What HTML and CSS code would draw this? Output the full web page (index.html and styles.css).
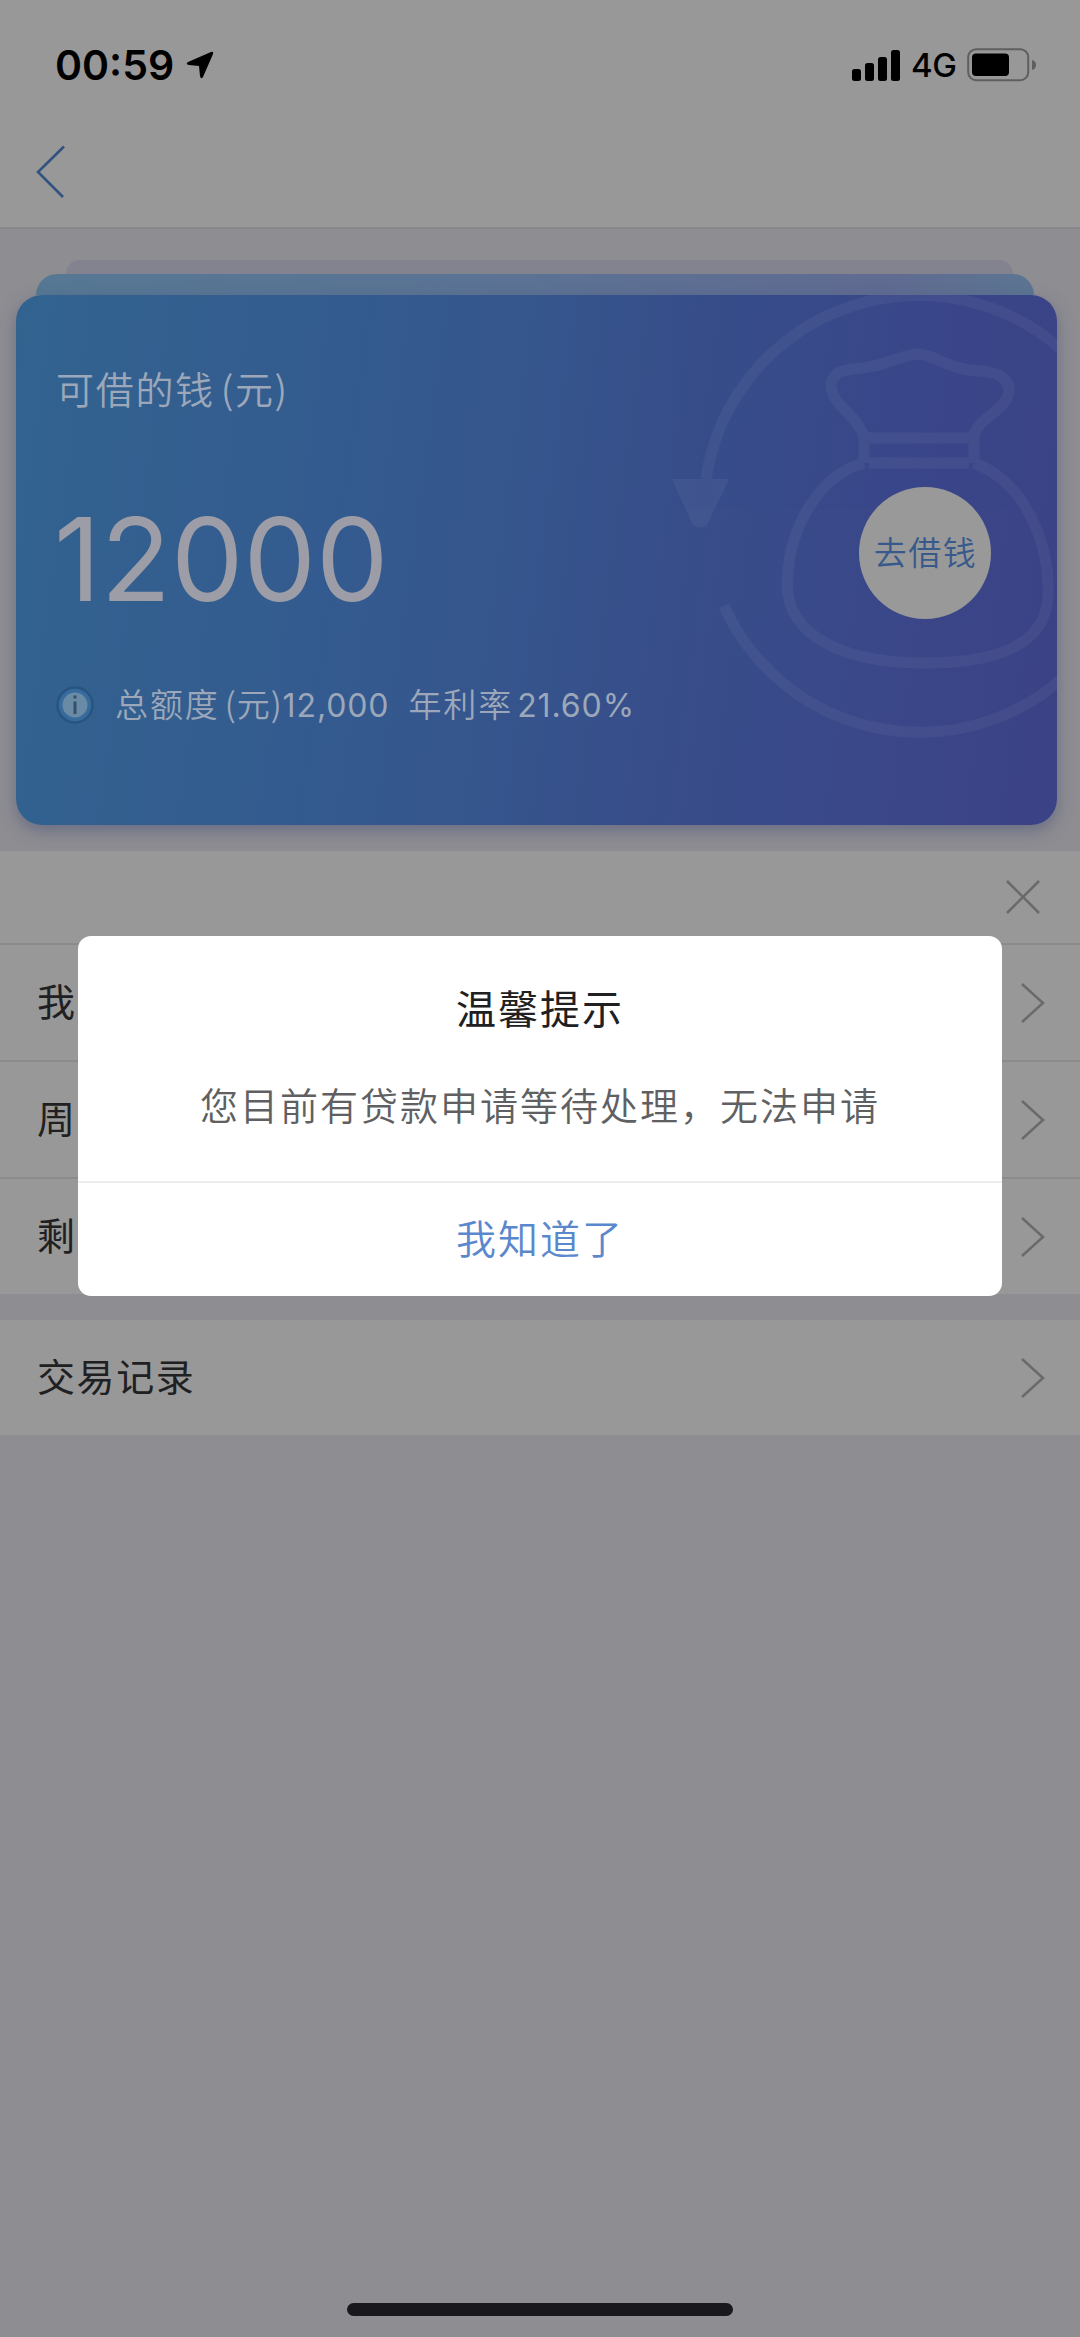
FILE: index.html
```html
<!DOCTYPE html>
<html lang="zh-CN">
<head>
<meta charset="utf-8">
<title>借钱</title>
<link rel="stylesheet" href="styles.css">
</head>
<body>
<div class="screen">
  <header class="topbar">
    <div class="status">
      <span class="time">00:59</span>
      <svg class="locate" width="30" height="30" viewBox="0 0 30 30"><path d="M3 12 26 2Q29 1 28 4L18 27Q16 30 15 26L14 16 4 15Q0 14 3 12Z"/></svg>
      <div class="status-right">
        <svg width="49" height="31" viewBox="0 0 49 31"><rect y="19" width="9" height="12" rx="2.5"/><rect x="13" y="13" width="9" height="18" rx="2.5"/><rect x="26" y="7" width="9" height="24" rx="2.5"/><rect x="39" width="9" height="31" rx="2.5"/></svg>
        <span class="network">4G</span>
        <svg width="70" height="34" viewBox="0 0 70 34"><rect x="1.2" y="1.2" width="60" height="31" rx="8" fill="none" stroke="#5f5f5f" stroke-width="2"/><rect x="5" y="5.5" width="37" height="22.5" rx="4"/><path d="M65 12Q69 13 69 17T65 22Z" fill="#5f5f5f"/></svg>
      </div>
    </div>
    <nav class="nav"><svg width="32" height="56" viewBox="0 0 32 56"><path d="M29 2.500 3 28 28 53" fill="none" stroke="#32527f" stroke-width="2.600"/></svg></nav>
  </header>

  <main>
    <section class="hero">
      <div class="layer layer-back"></div>
      <div class="layer layer-mid"></div>
      <div class="card">
        <svg class="bag" width="1041" height="530" viewBox="0 0 1041 530">
          <g fill="none" stroke="#fff" stroke-width="11" opacity=".045">
            <path d="M690 184A215 215 0 0 1 1060 69M708 311A215 215 0 0 0 1060 370"/>
            <path d="M848 168V141Q843 128 824 110C808 91 814 76 837 74C865 73 881 61 901 59C922 60 930 75 966 76C990 78 998 91 990 105C981 119 965 123 958 139V168"/>
            <path d="M853 143H953M853 168H953"/>
            <path d="M848 168C804 180 773 230 771 289C772 343 830 367 904 368C980 369 1030 350 1032 301C1034 250 1010 187 958 168"/>
            <path d="M656 184H713L691 230Q684 235 677 230Z" fill="#fff" stroke="none"/>
          </g>
        </svg>
        <div class="info">
          <p class="label">可借的钱<span class="unit">(元)</span></p>
          <p class="amount">12000</p>
          <p class="detail">
            <svg width="38" height="38" viewBox="0 0 38 38"><circle cx="19" cy="19" r="17.500" fill="#386b9d" stroke="#28557f" stroke-width="2.500"/><circle cx="19" cy="19" r="12.500" fill="#698ba5"/><path d="M19 9.500v3M19 15.500v12.500" stroke="#365069" stroke-width="3"/></svg>
            <span class="limit">总额度<span class="paren">(元)</span><span class="num">12,000</span></span>
            <span class="rate">年利率<span class="num percent">21.60%</span></span>
          </p>
        </div>
        <button class="borrow">去借钱</button>
      </div>
    </section>

    <section class="list">
      <div class="row head"><svg class="close" width="34" height="34" viewBox="0 0 34 34"><path d="M1 1 33 33M33 1 1 33"/></svg></div>
      <div class="row"><span>我</span><svg class="chev" width="25" height="42" viewBox="0 0 25 42"><path d="M2 2 23 21 2 40"/></svg></div>
      <div class="row"><span>周</span><svg class="chev" width="25" height="42" viewBox="0 0 25 42"><path d="M2 2 23 21 2 40"/></svg></div>
      <div class="row"><span>剩</span><svg class="chev" width="25" height="42" viewBox="0 0 25 42"><path d="M2 2 23 21 2 40"/></svg></div>
    </section>
    <section class="list records">
      <div class="row"><span>交易记录</span><svg class="chev" width="25" height="42" viewBox="0 0 25 42"><path d="M2 2 23 21 2 40"/></svg></div>
    </section>
  </main>

  <div class="home"></div>

  <div class="overlay">
    <div class="dialog">
      <div class="dialog-body">
        <h2>温馨提示</h2>
        <p>您目前有贷款申请等待处理，无法申请</p>
      </div>
      <button class="confirm">我知道了</button>
    </div>
  </div>
</div>
</body>
</html>
```

FILE: styles.css
```css
* { box-sizing: border-box; margin: 0; padding: 0; }
body { background: #8e8d92; font-family: "Noto Sans CJK SC", sans-serif; color: #202022; }
button { border: 0; font-family: inherit; }
svg { display: block; flex: none; }

.screen { position: relative; width: 1080px; height: 2337px; display: flex; flex-direction: column; overflow: hidden; }

.topbar { height: 229px; background: #989898; border-bottom: 2px solid #88888a; }
.status { height: 130px; padding: 0 43px 0 55px; display: flex; align-items: center; color: #000; }
.time { font: 600 41px/50px Inter, sans-serif; width: 118px; letter-spacing: 0; white-space: nowrap; }
.locate { margin-left: 12px; }
.status-right { margin-left: auto; display: flex; align-items: center; }
.network { font: 500 33px/40px Inter, sans-serif; width: 46px; margin: 0 10px; letter-spacing: -0.5px; }
.nav { height: 84px; padding-left: 35px; display: flex; align-items: center; }

.hero { height: 622px; padding: 31px 23px 0 16px; }
.layer { border-radius: 34px 34px 0 0; }
.layer-back { height: 14px; margin: 0 44px 0 50px; background: #82838f; }
.layer-mid { height: 21px; margin: 0 23px 0 20px; background: linear-gradient(90deg, #567894, #5b7394 45%, #606b91 85%, #5c7592); }
.card { position: relative; height: 530px; padding: 0 66px 0 40px; border-radius: 26px; background: linear-gradient(98deg, #32638f, #34598f 38%, #374f8a 60%, #3a4789 82%, #3b4285); box-shadow: 0 6px 16px rgba(70, 80, 120, .5); display: flex; justify-content: space-between; }
.bag { position: absolute; left: 0; top: 0; border-radius: 26px; }
.info { padding-top: 65px; color: #9ca8ba; }
.label { font-size: 38px; line-height: 56px; letter-spacing: 1.7px; font-weight: 350; }
.unit { margin-left: 6px; letter-spacing: 1.5px; }
.amount { margin: 74px 0 0 -2px; font: 400 115px/140px Inter, sans-serif; letter-spacing: 0; color: #9c9da6; }
.detail { margin-top: 50px; height: 50px; display: flex; align-items: center; font-size: 33px; font-weight: 350; letter-spacing: 1.9px; white-space: nowrap; }
.limit { margin: -4px 0 0 21px; }
.paren { margin-left: 5px; letter-spacing: 1px; }
.num { font-family: Inter, sans-serif; font-size: 32px; font-weight: 400; letter-spacing: .9px; }
.rate { margin: -4px 0 0 19px; }
.percent { margin-left: 4px; }
.borrow { position: relative; flex: none; margin-top: 192px; width: 132px; height: 132px; padding-bottom: 4px; border-radius: 50%; background: #999; color: #38598c; font-size: 33px; font-weight: 350; letter-spacing: 1.5px; text-indent: 1px; white-space: nowrap; }

.list { background: #989898; }
.row { height: 117px; padding: 0 35px 0 37px; display: flex; align-items: center; justify-content: space-between; font-size: 38px; letter-spacing: 1.6px; border-top: 2px solid #8b8b8b; }
.row span { padding-bottom: 6px; }
.head { height: 92px; border-top: 0; justify-content: flex-end; padding-right: 40px; }
.records { margin-top: 26px; height: 115px; }
.records .row { height: 115px; border-top: 0; }
.chev path, .close path { fill: none; stroke: #6a6a6a; stroke-width: 2.5; }

.home { width: 386px; height: 13px; margin: auto auto 21px; border-radius: 7px; background: #18181d; }

.overlay { position: absolute; inset: 0; padding-top: 936px; }
.dialog { width: 924px; height: 360px; margin-left: 78px; border-radius: 13px; background: #fff; display: flex; flex-direction: column; overflow: hidden; text-align: center; }
.dialog-body { height: 247px; padding-top: 41px; border-bottom: 2px solid #ececec; }
.dialog h2 { font-size: 40px; line-height: 60px; font-weight: 400; letter-spacing: 2px; }
.dialog p { margin-top: 37px; font-size: 38px; line-height: 60px; font-weight: 350; letter-spacing: 2px; color: #606062; }
.confirm { flex: 1; padding-bottom: 6px; background: none; color: #5b87cd; font-size: 40px; font-weight: 350; letter-spacing: 2px; }
```
